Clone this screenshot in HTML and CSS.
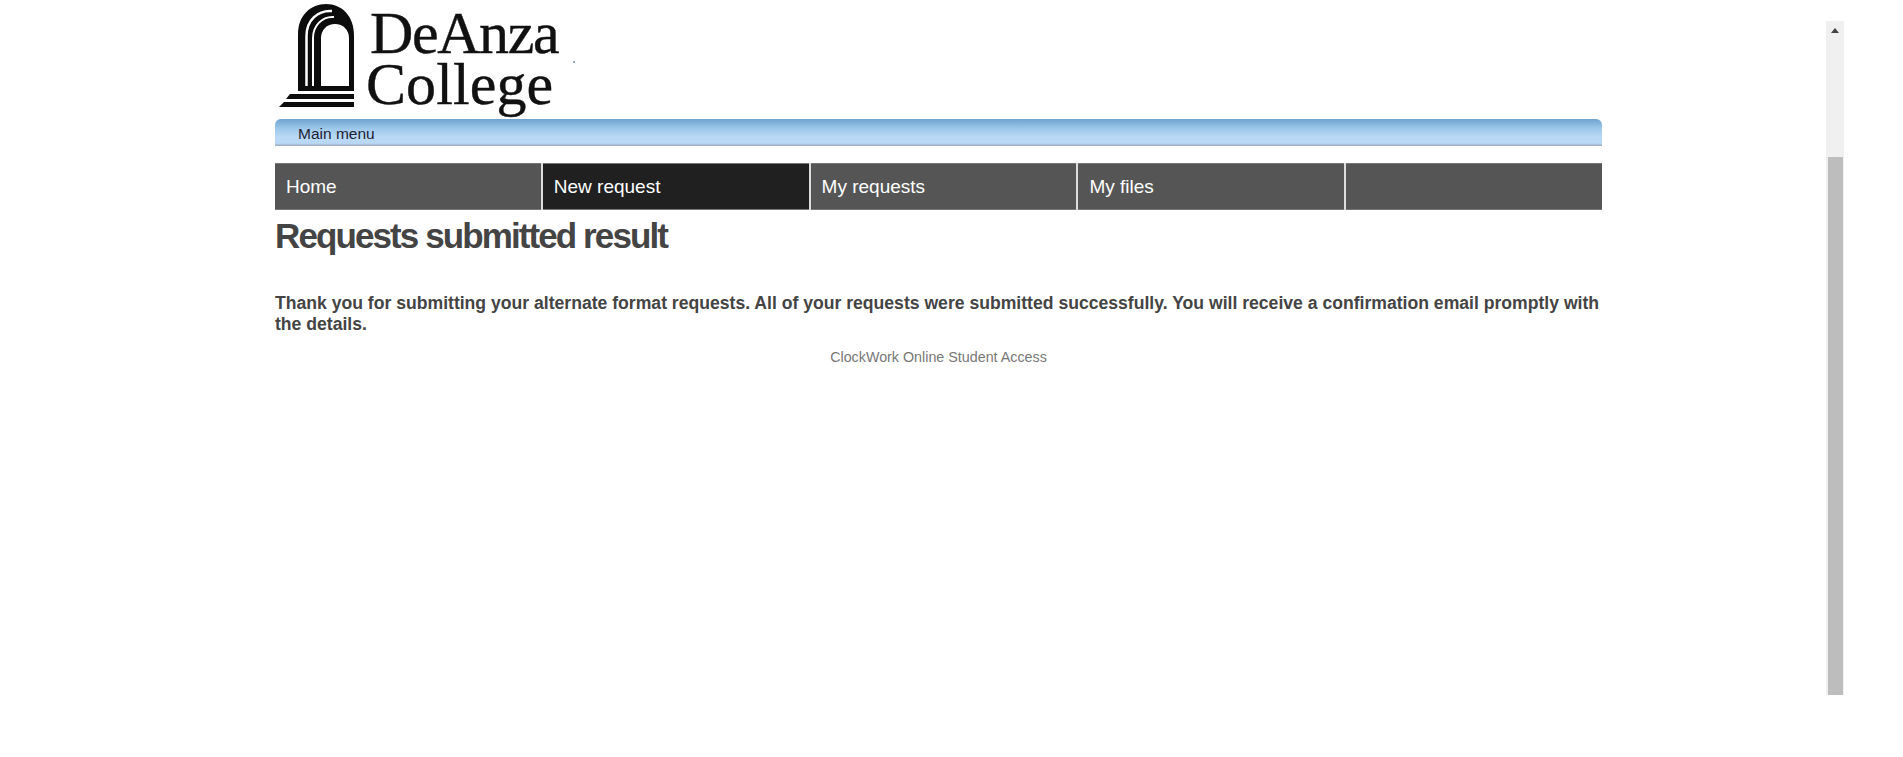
FILE: index.html
```html
<!DOCTYPE html>
<html lang="en">
<head>
    <meta charset="UTF-8">
    <title>Requests submitted result</title>
    <link rel="stylesheet" href="styles.css">
</head>
<body>
    <div class="page">
        <div class="container">
            <div class="logo">
                <svg class="arch" width="84" height="110" viewBox="275 0 84 110">
                    <path d="M298 91V34C298 15 311 4 326 4C342 4 354 16 354 36V91Z" fill="#0c0c0c"/>
                    <path d="M321 86V38C321 30 327 24 335 24C343 24 349 30 349 38V86Z" fill="white"/>
                    <path d="M306.500 86V36C306.500 20 318 10 332 11" fill="none" stroke="white" stroke-width="2.500"/>
                    <path d="M313 86V38C313 26 322 16 334 17" fill="none" stroke="white" stroke-width="2"/>
                    <path d="M290 94H354V99H286Z" fill="#0c0c0c"/>
                    <path d="M284 102H354V107H279Z" fill="#0c0c0c"/>
                </svg>
                <div class="logo-text">
                    <div class="logo-line">DeAnza</div>
                    <div class="logo-line logo-line-second">College</div>
                </div>
                <span class="logo-dot"></span>
            </div>
            <div class="main-menu">Main menu</div>
            <div class="tabs">
                <a class="tab">Home</a>
                <a class="tab active">New request</a>
                <a class="tab">My requests</a>
                <a class="tab">My files</a>
                <a class="tab tab-last"></a>
            </div>
            <h1>Requests submitted result</h1>
            <p class="message">Thank you for submitting your alternate format requests. All of your requests were submitted successfully. You will receive a confirmation email promptly with the details.</p>
            <div class="footer">ClockWork Online Student Access</div>
        </div>
        <div class="scrollbar">
            <div class="scroll-up"><span class="arrow"></span></div>
            <div class="scroll-thumb"></div>
        </div>
    </div>
</body>
</html>
```
FILE: styles.css
```css
html, body {
    margin: 0;
    height: 100%;
    overflow: hidden;
}
body {
    font-family: "Liberation Sans", Arial, sans-serif;
    background-color: white;
    color: #444;
}
.page {
    display: flex;
    height: 757px;
    padding-left: 275px;
    padding-right: 59px;
    box-sizing: border-box;
}
.container {
    width: 1327px;
}
.logo {
    display: flex;
    height: 119px;
}
.arch {
    flex: none;
}
.logo-text {
    width: 196px;
    margin-left: 11px;
    padding-top: 8px;
    font-family: "Liberation Serif", "Times New Roman", serif;
    color: #111;
    font-size: 60px;
    letter-spacing: -1.400px;
    line-height: 51px;
    -webkit-text-stroke: 0.4px #111;
}
.logo-line-second {
    margin-left: -4px;
    letter-spacing: 0.100px;
}
.logo-dot {
    width: 2px;
    height: 2px;
    margin: 61px 0 0 7px;
    background-color: #9ab;
}
.main-menu {
    height: 27px;
    line-height: 30px;
    padding-left: 23px;
    font-size: 15.500px;
    color: #223;
    border-radius: 6px 6px 0 0;
    background: linear-gradient(#6fa3cf 0, #9cc7ea 35%, #b8d8f5 65%, #b8d8f5 90%, #9aa8b6 100%);
}
.tabs {
    display: flex;
    margin-top: 17px;
    height: 47px;
    background-color: #ddd;
}
.tab {
    width: 265.800px;
    margin-right: 2px;
    padding-left: 11px;
    box-sizing: border-box;
    background-color: #555;
    border-top: 1px solid #777;
    border-bottom: 1px solid #777;
    color: white;
    font-size: 19px;
    line-height: 45px;
}
.tab.active {
    background-color: #202020;
}
.tab-last {
    flex: 1;
    margin-right: 0;
}
h1 {
    margin: 6px 0 0;
    font-size: 35px;
    line-height: 40px;
    letter-spacing: -1.900px;
    color: #444;
}
.message {
    margin: 37px 0 0;
    font-size: 17.600px;
    font-weight: bold;
    line-height: 21px;
    color: #444;
}
.footer {
    margin-top: 14px;
    text-align: center;
    font-size: 14.300px;
    color: #777;
}
.scrollbar {
    width: 18px;
    margin: 21px 0 62px auto;
    background-color: #f0f0f0;
    display: flex;
    flex-direction: column;
}
.scroll-up {
    height: 136px;
    display: flex;
    justify-content: center;
    padding-top: 7px;
    box-sizing: border-box;
}
.arrow {
    width: 0;
    height: 0;
    border-left: 4px solid transparent;
    border-right: 4px solid transparent;
    border-bottom: 5px solid #444;
}
.scroll-thumb {
    flex: 1;
    margin: 0 1px 0 2px;
    background-color: #bdbdbd;
}
```
